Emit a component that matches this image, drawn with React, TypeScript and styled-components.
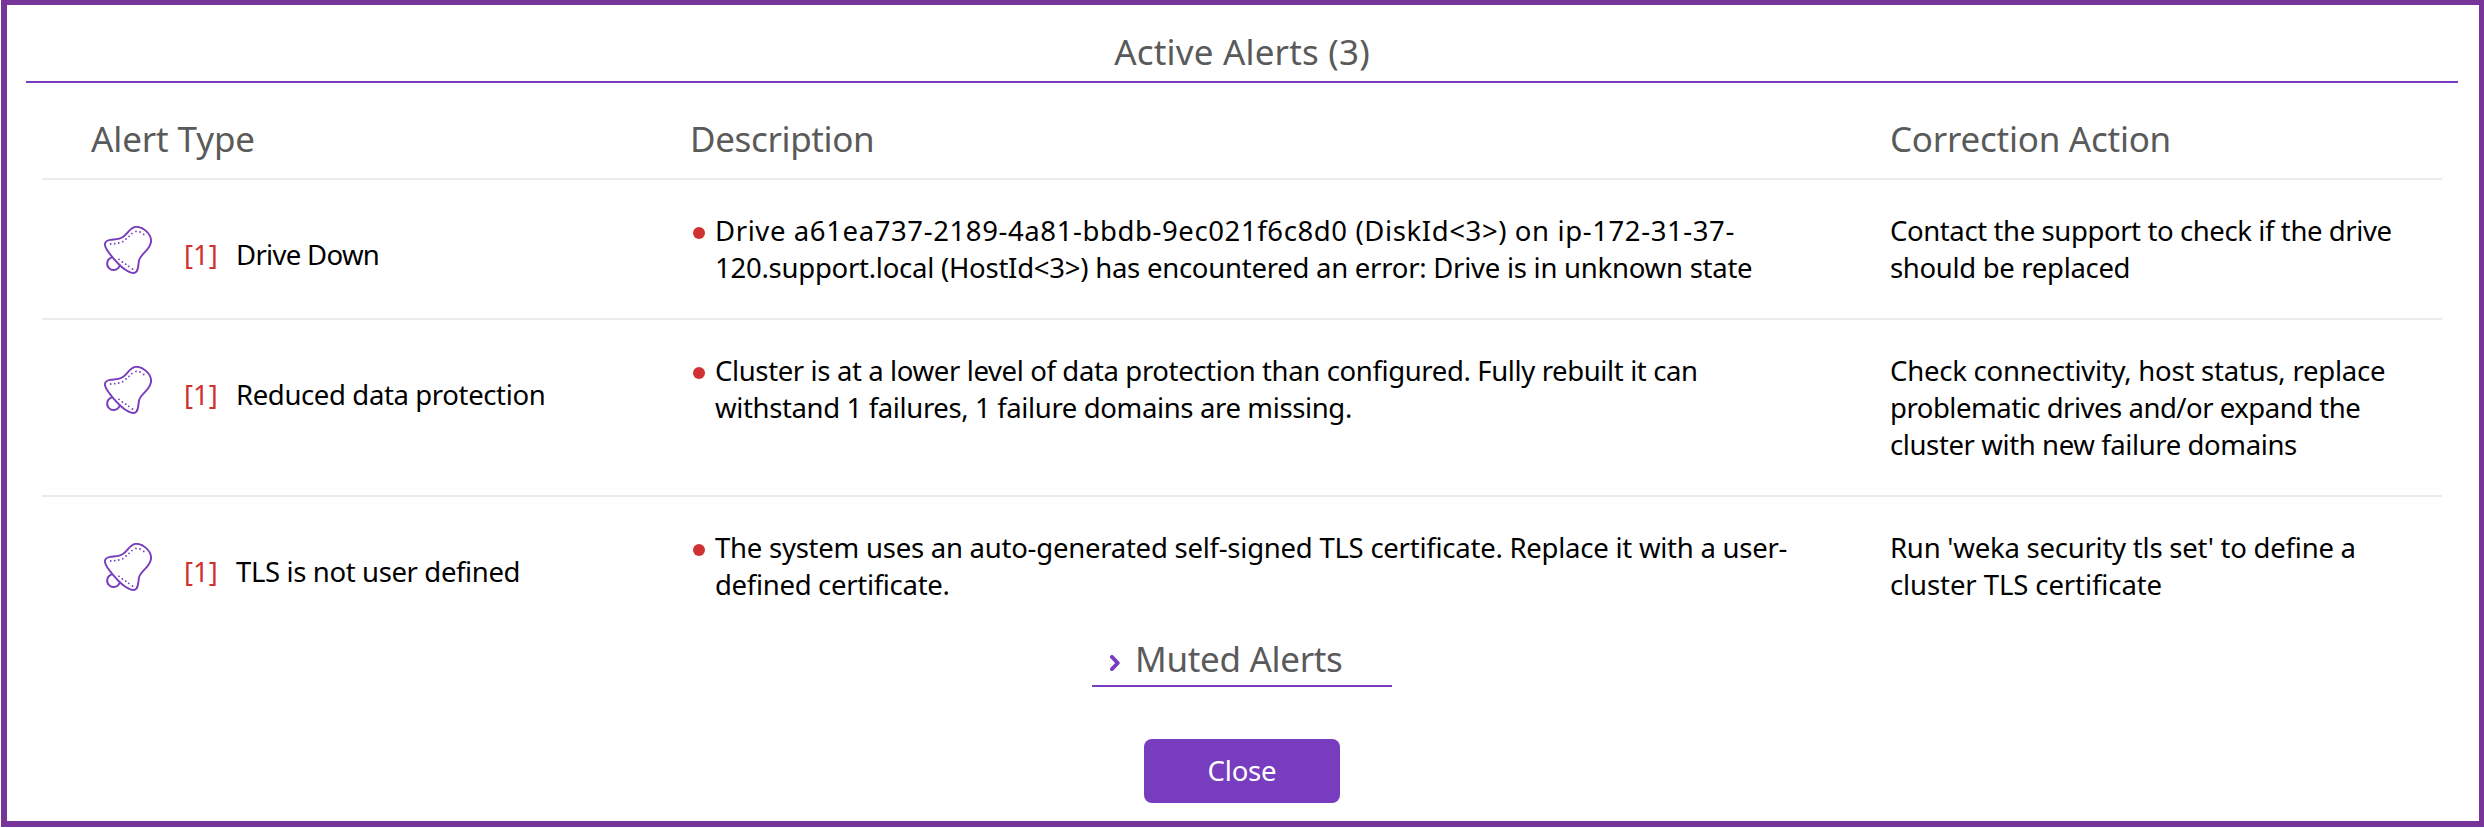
import React from 'react';
import styled, { createGlobalStyle } from 'styled-components';

const GlobalStyle = createGlobalStyle`
  *, *::before, *::after { box-sizing: border-box; }
  body {
    margin: 0;
    background: #ffffff;
    font-family: 'Noto Sans', 'Open Sans', sans-serif;
  }
`;

const Page = styled.div`
  width: 2484px;
  height: 828px;
  padding: 0 0 1px 1px;
`;

const Dialog = styled.section`
  display: flex;
  flex-direction: column;
  height: 827px;
  padding: 0 21px 0 19px;
  border: solid #783599;
  border-width: 5px 5px 6px 6px;
  background: #ffffff;
`;

/* Letter spacing is tuned per line of text. */
const Tracked = styled.span<{ $spacing: number }>`
  display: block;
  white-space: nowrap;
  letter-spacing: ${({ $spacing }) => $spacing}px;
`;

const Title = styled.h1`
  display: flex;
  justify-content: center;
  height: 78px;
  margin: 0;
  padding-top: 23px;
  border-bottom: 2px solid #783cbe;
  color: #5a5a5a;
  font-size: 35px;
  font-weight: 400;
  line-height: 48px;
`;

const Table = styled.div`
  width: 2400px;
  margin-left: 16px;
`;

const columns = '600px 1200px 1fr';

const HeaderRow = styled.div`
  display: grid;
  grid-template-columns: ${columns};
  height: 97px;
  padding: 32px 0 0 48px;
  border-bottom: 2px solid #ebebeb;
  color: #5a5a5a;
  font-size: 35px;
  line-height: 48px;
`;

const HeaderCell = styled.div<{ $indent?: number }>`
  padding-left: ${({ $indent = 0 }) => $indent}px;
`;

const Row = styled.div`
  display: grid;
  grid-template-columns: ${columns};
  align-items: start;
  padding: 32px 0 32px 48px;
  border-bottom: 2px solid #ebebeb;
  color: #000000;
  font-size: 27.5px;
  line-height: 37px;

  &:last-child {
    padding-bottom: 0;
    border-bottom: none;
  }
`;

const TypeCell = styled.div`
  display: flex;
  padding: 14px 0 0 14px;
`;

const Bell = styled.svg`
  flex: none;
  width: 48px;
  height: 48px;
`;

const Count = styled.div`
  width: 52px;
  margin: 10px 0 -11px 32px;
  color: #d03232;
`;

const TypeName = styled.div`
  margin: 10px 0 -11px;
`;

const DescriptionCell = styled.div`
  display: flex;
  padding-left: 3px;
`;

const Bullet = styled.span`
  flex: none;
  width: 12px;
  height: 12px;
  margin: 15px 10px 0 0;
  border-radius: 50%;
  background: #d03232;
`;

const Footer = styled.footer`
  display: flex;
  flex-direction: column;
  align-items: center;
  padding-top: 27px;
`;

const MutedToggle = styled.button`
  display: flex;
  width: 300px;
  height: 57px;
  padding: 0 0 0 18px;
  border: none;
  border-bottom: 2px solid #783cbe;
  background: none;
  color: #5a5a5a;
  font: 35px/48px 'Noto Sans', sans-serif;
`;

const Chevron = styled.svg`
  flex: none;
  width: 10px;
  height: 16px;
  margin: 25px 15px 0 0;
`;

const MutedLabel = styled.span`
  padding-top: 5px;
`;

const CloseButton = styled.button`
  display: flex;
  justify-content: center;
  width: 196px;
  height: 64px;
  margin-top: 52px;
  padding: 13px 0 0;
  border: none;
  border-radius: 8px;
  background: #783cbe;
  color: #ffffff;
  font: 27.5px/37px 'Noto Sans', sans-serif;
`;

type TextLine = [text: string, spacing: number];

interface Alert {
  name: TextLine;
  description: TextLine[];
  action: TextLine[];
}

const alerts: Alert[] = [
  {
    name: ['Drive Down', -0.68],
    description: [
      ['Drive a61ea737-2189-4a81-bbdb-9ec021f6c8d0 (DiskId<3>) on ip-172-31-37-', 0.608],
      ['120.support.local (HostId<3>) has encountered an error: Drive is in unknown state', -0.25],
    ],
    action: [
      ['Contact the support to check if the drive', -0.394],
      ['should be replaced', -0.316],
    ],
  },
  {
    name: ['Reduced data protection', -0.37],
    description: [
      ['Cluster is at a lower level of data protection than configured. Fully rebuilt it can', -0.373],
      ['withstand 1 failures, 1 failure domains are missing.', -0.37],
    ],
    action: [
      ['Check connectivity, host status, replace', -0.228],
      ['problematic drives and/or expand the', -0.48],
      ['cluster with new failure domains', -0.395],
    ],
  },
  {
    name: ['TLS is not user defined', -0.37],
    description: [
      ['The system uses an auto-generated self-signed TLS certificate. Replace it with a user-', -0.242],
      ['defined certificate.', -0.305],
    ],
    action: [
      ["Run 'weka security tls set' to define a", -0.233],
      ['cluster TLS certificate', -0.09],
    ],
  },
];

const stitches: [number, number][] = [
  [6.7, 18], [10.7, 17.7], [14.7, 17], [18.7, 15.7], [22, 13], [25, 10.3],
  [27.9, 7.6], [32, 5.4], [36, 6], [39.7, 8.4],
  [15, 33.3], [18.4, 36], [21.7, 38.2], [24.7, 40.3], [28.5, 43],
];

function BellIcon() {
  return (
    <Bell viewBox="0 0 48 48" fill="none" stroke="#783cbe" strokeWidth="1.9" strokeLinecap="round">
      <path d="M31.5 .9C38.5 .2 47.1 7.6 47.1 14.8C47.1 24 36.6 27.2 35 34.5C34.2 38.5 34.6 42.6 32.6 45.4C30.9 47.6 27.6 47.2 24.6 45.7C19 43 14.5 38.4 9.4 32.4C6.2 28.6 1.2 22.6 .9 18.8C.8 16 3.3 14.4 6 13.9C10.5 13.2 15 14 19.2 10.8C23.6 7.5 26.5 1.4 31.5 .9Z" />
      <path d="M7.2 31.7A6.4 6.4 0 1 0 15.5 40" />
      {stitches.map(([x, y]) => (
        <circle key={`${x}-${y}`} cx={x} cy={y} r="0.9" fill="#783cbe" stroke="none" />
      ))}
    </Bell>
  );
}

function Lines({ lines }: { lines: TextLine[] }) {
  return (
    <div>
      {lines.map(([text, spacing]) => (
        <Tracked key={text} $spacing={spacing}>{text}</Tracked>
      ))}
    </div>
  );
}

export default function App() {
  return (
    <Page>
      <GlobalStyle />
      <Dialog>
        <Title><Tracked $spacing={0.18}>Active Alerts (3)</Tracked></Title>
        <Table>
          <HeaderRow>
            <HeaderCell $indent={1}><Tracked $spacing={-0.13}>Alert Type</Tracked></HeaderCell>
            <HeaderCell><Tracked $spacing={-0.36}>Description</Tracked></HeaderCell>
            <HeaderCell><Tracked $spacing={-0.25}>Correction Action</Tracked></HeaderCell>
          </HeaderRow>
          {alerts.map((alert) => (
            <Row key={alert.name[0]}>
              <TypeCell>
                <BellIcon />
                <Count>[1]</Count>
                <TypeName><Lines lines={[alert.name]} /></TypeName>
              </TypeCell>
              <DescriptionCell>
                <Bullet />
                <Lines lines={alert.description} />
              </DescriptionCell>
              <Lines lines={alert.action} />
            </Row>
          ))}
        </Table>
        <Footer>
          <MutedToggle>
            <Chevron viewBox="0 0 10 16" fill="none" stroke="#783cbe" strokeWidth="3.8">
              <path d="M1.9 1.9L7.8 8L1.9 14.1" strokeLinecap="round" strokeLinejoin="round" />
            </Chevron>
            <MutedLabel><Tracked $spacing={-0.32}>Muted Alerts</Tracked></MutedLabel>
          </MutedToggle>
          <CloseButton><Tracked $spacing={-0.18}>Close</Tracked></CloseButton>
        </Footer>
      </Dialog>
    </Page>
  );
}
